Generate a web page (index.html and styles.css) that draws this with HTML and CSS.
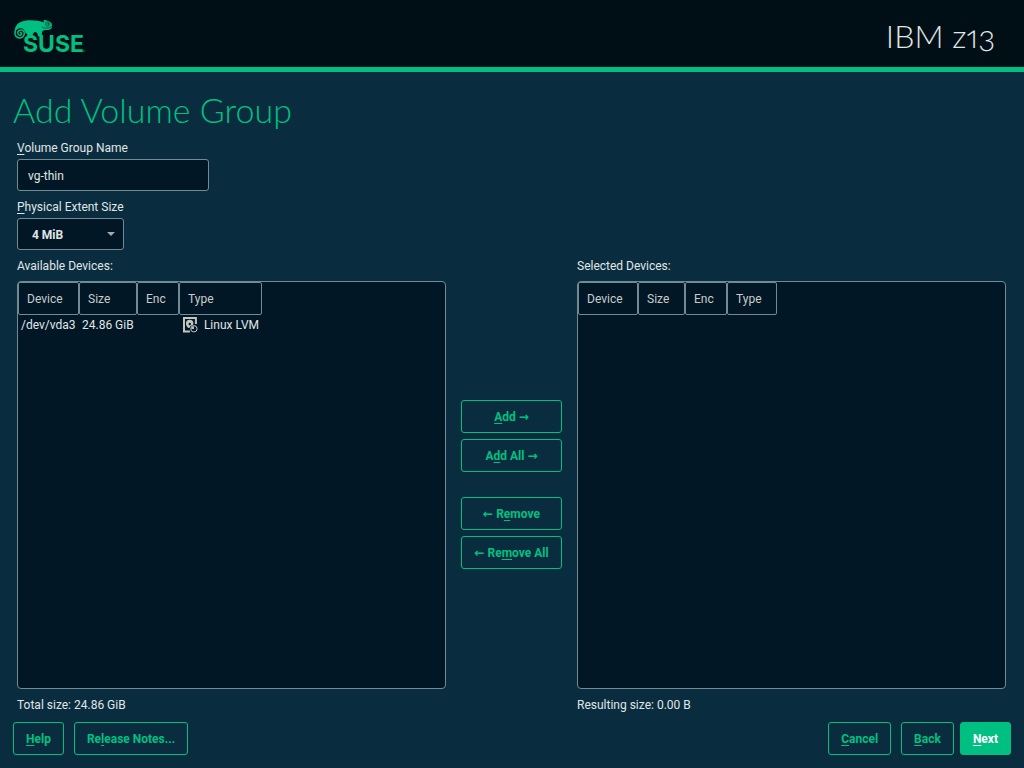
FILE: index.html
```html
<!DOCTYPE html>
<html lang="en">
<head>
<meta charset="utf-8">
<meta name="viewport" content="width=device-width, initial-scale=1">
<title>Add Volume Group</title>
<link rel="stylesheet" href="styles.css">
</head>
<body>
<header class="banner">
  <svg class="logo" viewBox="0 0 74 35" width="74" height="35" role="img" aria-label="SUSE">
    <path class="logo-body" d="M1.500 15C1.500 9 4 5 9 3.500C14 1.600 24 1.500 31 4.500L30.500 2C34 2 37.500 3.500 38.700 5.500L39 9C38.500 11.500 36 12 32 12C29.500 12.500 28.500 14 29 18.500H25C25 16 24 14.500 22.500 14C20.500 14 19.500 15.500 19.500 18.500H14.500C14.500 16.500 13.500 15 12 14.500C11.500 11 8.500 9.500 6 10.500C3.500 11 2.500 13 1.500 15Z"/>
    <path class="logo-curl" d="M2.500 13C.8 17 3.500 20 7 19.900C10.300 19.700 12 16.500 11 14C9.800 11.300 5.500 11.500 4.800 14.300C4.300 16.500 6.500 17.800 8 16.800C9.200 15.800 8.200 14.200 7 14.700"/>
    <path class="logo-line" d="M29 9C32 10.800 35 10.500 39 8.500"/>
    <circle class="logo-line" cx="34.500" cy="6" r="2.100"/>
    <circle class="logo-pupil" cx="35" cy="5.900" r=".8"/>
    <text class="logo-text" x="10" y="34">SUSE</text>
    <circle class="logo-mark" cx="71" cy="33" r=".7"/>
  </svg>
  <span class="machine">IBM z13</span>
</header>
<main class="page">
  <h1 class="title">Add Volume Group</h1>
  <form class="content">
    <div class="field">
      <label for="vg-name"><u>V</u>olume Group Name</label>
      <input class="text-input" id="vg-name" type="text" value="vg-thin">
    </div>
    <div class="field">
      <label for="extent"><u>P</u>hysical Extent Size</label>
      <span class="select-box">
        <select class="select" id="extent"><option>4 MiB</option></select>
        <svg class="arrow" width="8" height="4" viewBox="0 0 8 4" aria-hidden="true"><path d="M0 0H8L4 4Z"/></svg>
      </span>
    </div>
    <div class="transfer">
      <section class="side">
        <span class="caption" id="available">Available Devices:</span>
        <div class="list">
          <table class="devices" aria-labelledby="available">
            <colgroup><col class="w-device"><col class="w-size-wide"><col class="w-enc"><col class="w-type-wide"></colgroup>
            <thead><tr><th>Device</th><th>Size</th><th>Enc</th><th>Type</th></tr></thead>
            <tbody><tr>
              <td>/dev/vda3</td><td>24.86 GiB</td><td></td>
              <td><span class="type">
                <svg class="disk" width="16" height="16" viewBox="0 0 16 16" aria-hidden="true">
                  <path class="disk-line" d="M14 7V1H2V14.500H8"/>
                  <path class="disk-fill" d="M4 6.500A3.700 3.700 0 0 1 11.500 6.500L11 8L8.500 9L7.500 11H6.500C5 10 4 8.500 4 6.500Z"/>
                  <circle class="disk-hole" cx="7.800" cy="7" r="1.200"/>
                  <circle class="disk-ring" cx="12" cy="11.800" r="3.200"/>
                  <path class="disk-fill" d="M12 12V9.300A2.600 2.600 0 0 0 9.400 12Z"/>
                </svg>Linux LVM</span></td>
            </tr></tbody>
          </table>
        </div>
        <span class="caption">Total size: 24.86 GiB</span>
      </section>
      <div class="moves">
        <button class="button" type="button"><u>A</u>dd →</button>
        <button class="button" type="button">A<u>d</u>d All →</button>
        <button class="button remove" type="button">← R<u>e</u>move</button>
        <button class="button" type="button">← Re<u>m</u>ove All</button>
      </div>
      <section class="side">
        <span class="caption" id="selected">Selected Devices:</span>
        <div class="list">
          <table class="devices" aria-labelledby="selected">
            <colgroup><col class="w-device-slim"><col class="w-size"><col class="w-enc"><col class="w-type"></colgroup>
            <thead><tr><th>Device</th><th>Size</th><th>Enc</th><th>Type</th></tr></thead>
          </table>
        </div>
        <span class="caption">Resulting size: 0.00 B</span>
      </section>
    </div>
  </form>
  <footer class="actions">
    <button class="button" type="button"><u>H</u>elp</button>
    <button class="button" type="button">Re<u>l</u>ease Notes...</button>
    <span class="spacer"></span>
    <button class="button" type="button"><u>C</u>ancel</button>
    <span class="pair">
      <button class="button" type="button"><u>B</u>ack</button>
      <button class="button primary" type="submit"><u>N</u>ext</button>
    </span>
  </footer>
</main>
</body>
</html>
```

FILE: styles.css
```css
:root {
  --green: #00c081;
  --line: #718b95;
  --field: #011726;
}
* { box-sizing: border-box; }
body {
  margin: 0;
  min-height: 100vh;
  display: flex;
  flex-direction: column;
  background: #092d3f;
  color: #e0e6e6;
  font: 12px/16px Roboto, sans-serif;
}
.banner {
  display: flex;
  align-items: center;
  justify-content: space-between;
  height: 72px;
  padding: 4px 29px 0 13px;
  background: #000f16;
  border-bottom: 5px solid var(--green);
}
.logo { display: block; overflow: visible; }
.logo-body { fill: var(--green); }
.logo-curl { fill: none; stroke: var(--green); stroke-width: 1.5; }
.logo-line { fill: none; stroke: #00452f; stroke-width: .8; }
.logo-pupil { fill: #00452f; }
.logo-mark { fill: var(--green); }
.logo-text { fill: var(--green); font: 700 23px Inter, sans-serif; }
.machine { font: 300 32px/40px Lato, sans-serif; font-variant-numeric: oldstyle-nums proportional-nums; }
.page { flex: 1; display: flex; flex-direction: column; padding: 18px 13px 13px; }
.title { margin: 0; color: var(--green); font: 300 34px/40px Lato, sans-serif; }
.content { flex: 1; display: flex; flex-direction: column; gap: 8px; padding: 10px 5px 9px 4px; }
.field { display: flex; flex-direction: column; align-items: flex-start; gap: 3px; }
u { text-decoration: underline 1px; text-underline-offset: 2px; text-decoration-skip-ink: none; }
.text-input, .select {
  height: 32px;
  background: var(--field);
  border: 1px solid var(--line);
  border-radius: 3px;
  color: inherit;
  font: inherit;
}
.text-input { width: 192px; padding: 2px 10px 0; }
.select-box { position: relative; }
.select { display: block; width: 107px; padding: 2px 14px 0; appearance: none; font-weight: 700; }
.arrow { position: absolute; right: 9px; top: 14px; fill: #aaa9a3; pointer-events: none; }
.transfer { flex: 1; display: grid; grid-template-columns: 1fr 101px 1fr; gap: 15px; }
.side { display: flex; flex-direction: column; min-width: 0; }
.list { flex: 1; margin: 7px 0 8px; background: var(--field); border: 1px solid var(--line); border-radius: 4px; }
.devices { table-layout: fixed; width: 0; border-collapse: separate; border-spacing: 0; }
.w-device { width: 61px; }
.w-device-slim { width: 60px; }
.w-size { width: 47px; }
.w-size-wide { width: 58px; }
.w-enc { width: 42px; }
.w-type { width: 50px; }
.w-type-wide { width: 83px; }
.devices th {
  height: 33px;
  padding: 0 8px;
  border: 1px solid var(--line);
  border-radius: 2px;
  color: #c9cdca;
  font-weight: 400;
  text-align: left;
}
.devices td { height: 20px; padding: 0 3px; white-space: nowrap; }
.type { display: flex; gap: 6px; }
.disk-line { fill: none; stroke: #c5c5c0; stroke-width: 2; }
.disk-ring { fill: var(--field); stroke: #c5c5c0; stroke-width: 1; }
.disk-fill { fill: #c5c5c0; }
.disk-hole { fill: var(--field); }
.moves { display: flex; flex-direction: column; justify-content: center; gap: 6px; padding-bottom: 2px; }
.remove { margin-top: 19px; }
.button {
  height: 33px;
  padding: 0 12px;
  background: transparent;
  border: 1px solid var(--green);
  border-radius: 3px;
  color: var(--green);
  font: 700 12px/16px Roboto, "DejaVu Sans", sans-serif;
  white-space: nowrap;
}
.actions { display: flex; gap: 10px; }
.spacer { flex: 1; }
.pair { display: flex; gap: 6px; }
.primary { background: var(--green); color: #fff; }
```
